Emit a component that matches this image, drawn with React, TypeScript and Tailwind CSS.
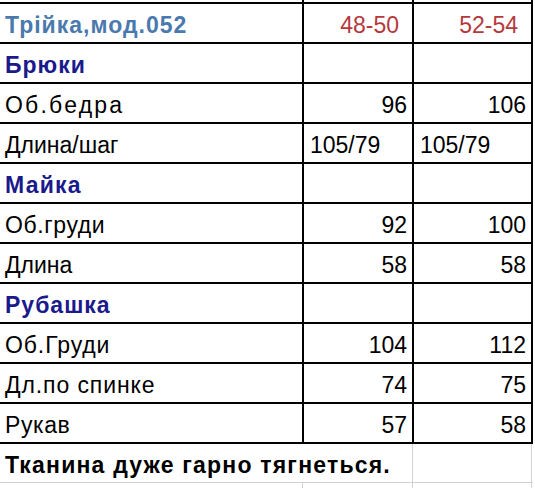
import React from "react";

type RowProps = {
  label: string;
  a?: string;
  b?: string;
  kind?: "title" | "section" | "plain";
  textVals?: boolean;
  labelClass?: string;
};

function Row({ label, a = "", b = "", kind = "plain", textVals = false, labelClass = "tracking-[0.8px]" }: RowProps) {
  const labelColor =
    kind === "title"
      ? "text-[#4a7aad] font-bold"
      : kind === "section"
      ? "text-[#1a1a8c] font-bold"
      : "text-black";
  const valCls =
    kind === "title"
      ? "text-right pr-[13px] text-[#b5393c]"
      : textVals
      ? "text-left pl-[6px]"
      : "text-right pr-[5px]";
  return (
    <div className="grid grid-cols-[304px_110px_119px] h-[40px] border-b-2 border-black">
      <div className={`border-r-2 border-black pt-[8px] pl-[5px] whitespace-nowrap ${labelColor} ${labelClass}`}>
        {label}
      </div>
      <div className={`border-r-2 border-black pt-[8px] whitespace-nowrap ${valCls}`}>{a}</div>
      <div className={`border-r-2 border-black pt-[8px] whitespace-nowrap ${valCls}`}>{b}</div>
    </div>
  );
}

export default function App() {
  return (
    <div className="w-[535px] h-[488px] overflow-hidden bg-white text-black text-[23px] leading-[26px] font-['Liberation_Sans',Arial,sans-serif]">
      <div className="w-[533px]">
        <div className="grid grid-cols-[304px_110px_119px] h-[2px]">
          <div className="border-r-2 border-black" />
          <div className="border-r-2 border-black" />
          <div className="border-r-2 border-black" />
        </div>
        <div className="border-t-2 border-black">
          <Row kind="title" label="Трійка,мод.052" labelClass="tracking-[1px]" a="48-50" b="52-54" />
          <Row kind="section" label="Брюки" labelClass="tracking-[1px]" />
          <Row label="Об.бедра" labelClass="tracking-[2.2px]" a="96" b="106" />
          <Row label="Длина/шаг" labelClass="tracking-[0px]" a="105/79" b="105/79" textVals />
          <Row kind="section" label="Майка" labelClass="tracking-[1.2px]" />
          <Row label="Об.груди" labelClass="tracking-[0.6px]" a="92" b="100" />
          <Row label="Длина" labelClass="tracking-[0px]" a="58" b="58" />
          <Row kind="section" label="Рубашка" labelClass="tracking-[1px]" />
          <Row label="Об.Груди" labelClass="tracking-[0.9px]" a="104" b="112" />
          <Row label="Дл.по спинке" labelClass="tracking-[0.9px]" a="74" b="75" />
          <Row label="Рукав" labelClass="tracking-[0.6px]" a="57" b="58" />
          <div className="grid grid-cols-[413px_119px] h-[39px] border-b border-[#d2d2d2]">
            <div className="border-r border-[#d2d2d2] pt-[8px] pl-[5px] font-bold whitespace-nowrap tracking-[1.2px]">
              Тканина дуже гарно тягнеться.
            </div>
            <div className="border-r border-[#d2d2d2]" />
          </div>
          <div className="grid grid-cols-[303px_110px_119px] h-[10px]">
            <div className="border-r border-[#d2d2d2]" />
            <div className="border-r border-[#d2d2d2]" />
            <div className="border-r border-[#d2d2d2]" />
          </div>
        </div>
      </div>
    </div>
  );
}
